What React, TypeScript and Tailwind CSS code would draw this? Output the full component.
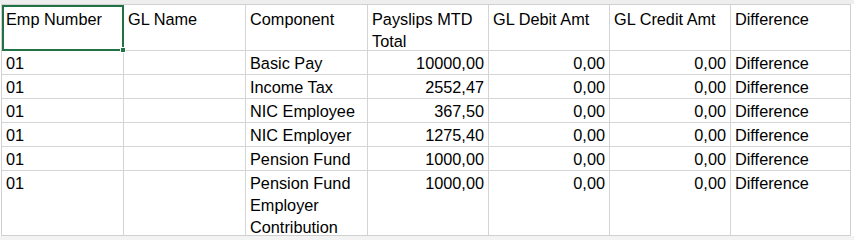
const headers = [
  { label: "Emp Number", right: false },
  { label: "GL Name", right: false },
  { label: "Component", right: false },
  { label: "Payslips MTD Total", right: false },
  { label: "GL Debit Amt", right: false },
  { label: "GL Credit Amt", right: false },
  { label: "Difference", right: false },
];

const rows = [
  ["01", "", "Basic Pay", "10000,00", "0,00", "0,00", "Difference"],
  ["01", "", "Income Tax", "2552,47", "0,00", "0,00", "Difference"],
  ["01", "", "NIC Employee", "367,50", "0,00", "0,00", "Difference"],
  ["01", "", "NIC Employer", "1275,40", "0,00", "0,00", "Difference"],
  ["01", "", "Pension Fund", "1000,00", "0,00", "0,00", "Difference"],
  ["01", "", "Pension Fund Employer Contribution", "1000,00", "0,00", "0,00", "Difference"],
];

const numeric = [false, false, false, true, true, true, false];

export default function App() {
  return (
    <div
      className="h-[240px] w-[854px] overflow-hidden bg-[#f3f3f3] text-[16.3px] leading-[22px] text-black"
      style={{ fontFamily: '"Liberation Sans", Arial, sans-serif' }}
    >
      <div className="h-[4px] bg-[#eeeeee]" />
      <div className="flex">
        <div className="w-[1px] bg-white" />
        <div className="grid grid-cols-[121px_121px_121px_120px_120px_120px_119px] grid-rows-[45px_23px_23px_23px_23px_23px_64px] gap-px border border-[#d0d0d0] bg-[#d4d4d4]">
          {headers.map((h, i) => (
            <div key={h.label} className="relative bg-white px-[4px] pt-[3px]">
              {h.label}
              {i === 0 && (
                <>
                  <div className="absolute -right-px -bottom-px left-0 top-0 border-2 border-[#217346]" />
                  <div className="absolute -bottom-[3px] -right-[3px] z-10 h-[6px] w-[6px] border border-white bg-[#217346]" />
                </>
              )}
            </div>
          ))}
          {rows.map((r, ri) =>
            r.map((c, ci) => (
              <div
                key={`${ri}-${ci}`}
                className={`bg-white px-[4px] pt-[1px] ${numeric[ci] ? "text-right" : "text-left"}`}
              >
                {c}
              </div>
            ))
          )}
        </div>
        <div className="flex-1 bg-white" />
      </div>
    </div>
  );
}
